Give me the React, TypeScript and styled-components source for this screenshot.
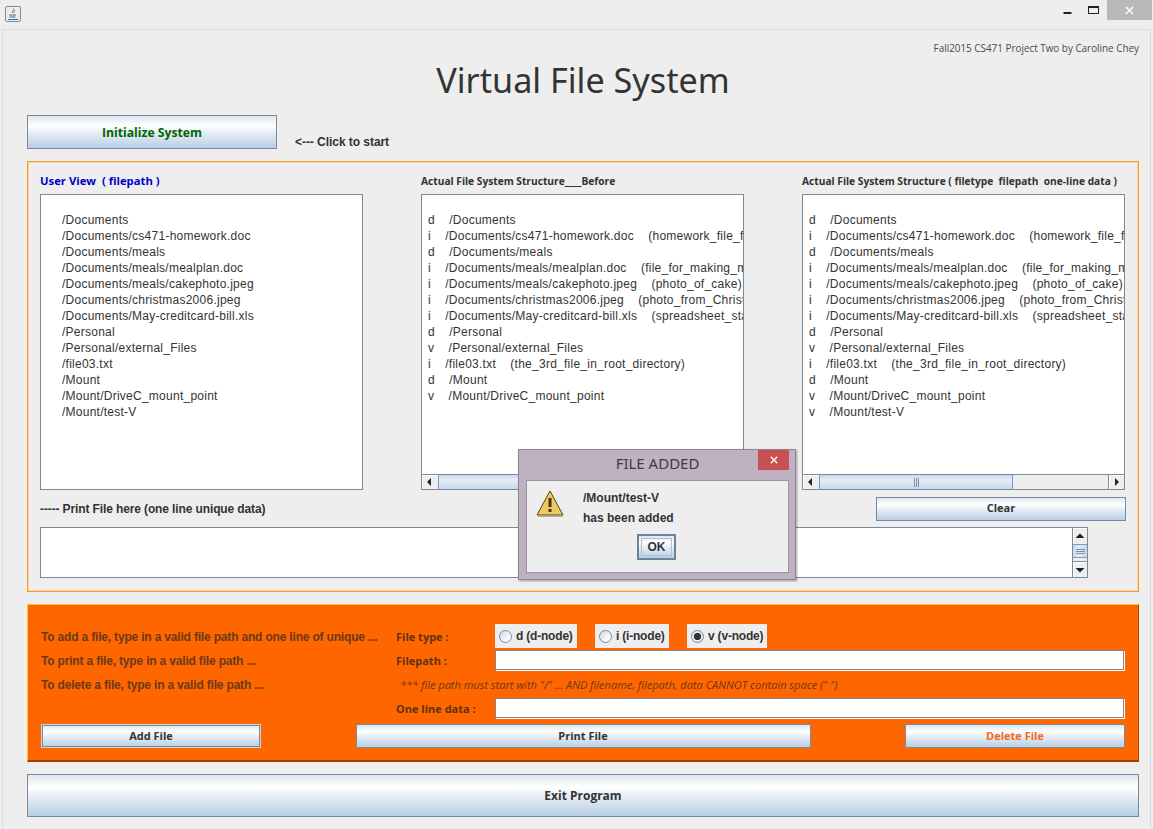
import * as React from "react";
import styled, { createGlobalStyle } from "styled-components";

const UI_FONT = `"Open Sans", "Noto Sans", sans-serif`;
const ARIAL = `"Liberation Sans", Arial, sans-serif`;
const EDGE = "#7a8a99";
const OCEAN = "linear-gradient(180deg, #dce6f0 0%, #ffffff 30%, #dfe8f2 60%, #b8cfe5 100%)";

const GlobalStyle = createGlobalStyle`
  html, body {
    margin: 0;
    padding: 0;
    background: #eeeeee;
  }
  * {
    box-sizing: border-box;
  }
`;

const Frame = styled.div`
  position: relative;
  width: 1153px;
  height: 829px;
  overflow: hidden;
  background: #eeeeee;
  color: #333333;
  font-family: ${ARIAL};
`;

const TitleBar = styled.div`
  display: flex;
  justify-content: space-between;
  height: 29px;
  padding: 0 1px 0 5px;
`;

const AppIcon = styled.div`
  width: 16px;
  height: 16px;
  margin-top: 6px;
  border: 1px solid #7f8b96;
  border-radius: 2px;
  background: #e8edf2;
  display: flex;
  align-items: center;
  justify-content: center;
`;

const WindowControls = styled.div`
  display: flex;
  height: 20px;
`;

const WindowControl = styled.div<{ $close?: boolean; $width: number }>`
  width: ${(p) => p.$width}px;
  display: flex;
  align-items: center;
  justify-content: center;
  background: ${(p) => (p.$close ? "#b9b9b9" : "transparent")};
`;

const Content = styled.div`
  margin: 0 2px;
  height: 800px;
  padding: 0 11px 0 24px;
  border: 1px solid #dcdcdc;
  border-bottom: none;
`;

const Header = styled.header`
  height: 85px;
  display: flex;
  flex-direction: column;
`;

const Credit = styled.div`
  align-self: flex-end;
  margin-top: 11px;
  font-family: ${UI_FONT};
  font-size: 9.9px;
  line-height: 15px;
  color: #4a4a4a;
`;

const Title = styled.h1`
  margin: 0;
  text-align: center;
  font-family: "Noto Sans", sans-serif;
  font-weight: 400;
  font-size: 34.2px;
  line-height: 48px;
  color: #333333;
`;

const StartRow = styled.div`
  display: flex;
  align-items: flex-end;
  gap: 18px;
  height: 34px;
  margin-bottom: 12px;
`;

const Hint = styled.span`
  margin-bottom: -1px;
  font-size: 12px;
  font-weight: 700;
  line-height: 16px;
  letter-spacing: -0.05px;
  color: #333333;
`;

const Button = styled.button<{ $w?: number; $h: number; $ink?: string; $size?: number; $halo?: boolean }>`
  display: block;
  flex: none;
  width: ${(p) => (p.$w ? `${p.$w}px` : "100%")};
  height: ${(p) => p.$h}px;
  padding: 0 0 ${(p) => (p.$h === 24 ? 2 : 0)}px;
  border: 1px solid ${(p) => (p.$halo ? "#c9d3de" : EDGE)};
  box-shadow: ${(p) => (p.$halo ? `inset 0 0 0 1px ${EDGE}` : "none")};
  background: ${OCEAN};
  color: ${(p) => p.$ink ?? "#333333"};
  font-family: ${UI_FONT};
  font-size: ${(p) => p.$size ?? 11}px;
  font-weight: 700;
`;

const ViewPanel = styled.section`
  height: 431px;
  padding: 0 12px;
  border: 1px solid #fb9a1e;
  box-shadow: inset 0 0 0 1px rgba(247, 170, 60, 0.35);
  margin-bottom: 12px;
`;

const Columns = styled.div`
  display: grid;
  grid-template-columns: repeat(3, 323px);
  column-gap: 58px;
`;

const ColumnLabel = styled.div<{ $blue?: boolean }>`
  height: 32px;
  padding-top: 12px;
  font-family: ${UI_FONT};
  font-size: ${(p) => (p.$blue ? 11.3 : 10.2)}px;
  font-weight: 700;
  line-height: 14px;
  white-space: pre;
  color: ${(p) => (p.$blue ? "#0000cc" : "#333333")};
`;

const LabelRule = styled.span`
  font-size: 13.6px;
  line-height: 0;
`;

const ListBox = styled.div`
  display: flex;
  flex-direction: column;
  height: 296px;
  border: 1px solid ${EDGE};
  background: #ffffff;
`;

const ListBody = styled.div<{ $inset: number }>`
  flex: 1;
  min-height: 0;
  overflow: hidden;
  padding: 17px 0 0 ${(p) => p.$inset}px;
`;

const ListRow = styled.div`
  height: 16px;
  font-size: 12px;
  line-height: 16px;
  letter-spacing: 0.25px;
  white-space: pre;
  color: #333333;
`;

const HScroll = styled.div`
  flex: none;
  display: flex;
  height: 15px;
  background: #eeeeee;
  border-top: 1px solid ${EDGE};
`;

const ScrollEnd = styled.div<{ $trail?: boolean }>`
  flex: none;
  width: 16px;
  display: flex;
  align-items: center;
  justify-content: center;
  background: #eeeeee;
  border-left: ${(p) => (p.$trail ? `1px solid ${EDGE}` : "none")};
  box-shadow: inset 1px 1px 0 #ffffff;
`;

const HThumb = styled.div`
  width: 194px;
  display: flex;
  align-items: center;
  justify-content: center;
  gap: 1px;
  background: linear-gradient(180deg, #c6d8ee 0%, #e6eef8 35%, #c6d8ee 100%);
  border-left: 1px solid #7b9ac0;
  border-right: 1px solid #7b9ac0;
`;

const HGrip = styled.i`
  width: 1px;
  height: 9px;
  background: #7f8fa3;
`;

const HTrack = styled.div`
  flex: 1;
`;

const PrintRow = styled.div`
  display: flex;
  align-items: center;
  justify-content: space-between;
  height: 37px;
`;

const PrintLabel = styled.span`
  font-size: 12px;
  font-weight: 700;
  line-height: 16px;
  letter-spacing: -0.12px;
`;

const PrintBox = styled.div`
  display: flex;
  justify-content: flex-end;
  width: 1048px;
  height: 51px;
  border: 1px solid ${EDGE};
  background: #ffffff;
`;

const VScroll = styled.div`
  flex: none;
  width: 15px;
  display: flex;
  flex-direction: column;
  background: #eeeeee;
  border-left: 1px solid ${EDGE};
`;

const VEnd = styled.div<{ $end?: boolean }>`
  flex: none;
  height: 16px;
  display: flex;
  align-items: center;
  justify-content: center;
  border-top: ${(p) => (p.$end ? `1px solid ${EDGE}` : "none")};
  box-shadow: inset 1px 1px 0 #ffffff;
`;

const VThumb = styled.div`
  flex: none;
  height: 14px;
  display: flex;
  flex-direction: column;
  align-items: center;
  justify-content: center;
  gap: 1px;
  background: linear-gradient(90deg, #c6d8ee 0%, #e6eef8 40%, #c6d8ee 100%);
  border-top: 1px solid #7b9ac0;
  border-bottom: 1px solid #7b9ac0;
`;

const VGrip = styled.i`
  width: 9px;
  height: 1px;
  background: #7f8fa3;
`;

const VTrack = styled.div`
  flex: 1;
`;

const ActionPanel = styled.section`
  height: 158px;
  padding: 19px 13px 0;
  margin-bottom: 12px;
  background: #ff6600;
  border: 1px solid #ffc233;
  border-right-color: #9c4200;
  border-bottom: 2px solid #9c4200;
`;

const FormGrid = styled.div`
  display: grid;
  grid-template-columns: 355px 99px 629px;
  grid-auto-rows: 24px;
  align-items: center;
  margin-bottom: 4px;
`;

const Instruction = styled.div`
  padding-top: 2px;
  font-size: 12px;
  font-weight: 700;
  line-height: 16px;
  letter-spacing: -0.18px;
  color: #6a3a18;
  white-space: nowrap;
`;

const FieldLabel = styled.div`
  font-family: ${UI_FONT};
  font-size: 11px;
  font-weight: 700;
  color: #5e3312;
`;

const RadioGroup = styled.div`
  display: flex;
  gap: 18px;
`;

const RadioOption = styled.label<{ $w: number }>`
  width: ${(p) => p.$w}px;
  height: 24px;
  display: flex;
  align-items: center;
  gap: 4px;
  padding-left: 4px;
  background: #eeeeee;
  font-size: 12px;
  font-weight: 700;
  letter-spacing: -0.2px;
  color: #333333;
`;

const RadioDot = styled.span<{ $on?: boolean }>`
  width: 13px;
  height: 13px;
  border-radius: 50%;
  border: 1px solid ${EDGE};
  background: ${(p) =>
    p.$on
      ? "radial-gradient(circle, #333333 0 3.4px, #e4ebf3 3.9px)"
      : "linear-gradient(135deg, #c9d8e8 0%, #ffffff 80%)"};
`;

const TextField = styled.div`
  height: 20px;
  background: #ffffff;
  border: 1px solid #80868c;
  box-shadow: 1px 1px 0 #ffffff;
`;

const Note = styled.div`
  grid-column: 2 / 4;
  padding-left: 4px;
  font-family: ${UI_FONT};
  font-size: 11px;
  font-style: italic;
  white-space: pre;
  color: #6a3a18;
`;

const ActionRow = styled.div`
  display: flex;
  justify-content: space-between;
`;

const Dialog = styled.div`
  position: absolute;
  left: 518px;
  top: 449px;
  width: 278px;
  height: 131px;
  padding: 0 6px 6px 7px;
  display: flex;
  flex-direction: column;
  background: #bfb0c2;
  border: 1px solid #8f8496;
  box-shadow: 1px 1px 2px rgba(0, 0, 0, 0.35);
`;

const DialogHead = styled.div`
  position: relative;
  flex: none;
  height: 30px;
  padding-bottom: 4px;
  display: flex;
  align-items: center;
  justify-content: center;
  font-family: "Noto Sans", sans-serif;
  font-size: 15px;
  color: #3c3c44;
`;

const DialogClose = styled.div`
  position: absolute;
  right: 0;
  top: 0;
  width: 31px;
  height: 20px;
  display: flex;
  align-items: center;
  justify-content: center;
  background: #c75050;
`;

const DialogBody = styled.div`
  flex: 1;
  display: flex;
  flex-direction: column;
  padding: 8px 0 0 9px;
  background: #eeeeee;
  border: 1px solid #9a93a3;
`;

const DialogMessage = styled.div`
  display: flex;
  gap: 19px;
  height: 45px;
`;

const DialogText = styled.div`
  margin-top: -1px;
  font-size: 12px;
  font-weight: 700;
  line-height: 20px;
`;

const OkButton = styled.button`
  align-self: flex-start;
  width: 39px;
  height: 26px;
  margin: 0 0 0 101px;
  padding: 0;
  border: 2px solid #6f8296;
  background: ${OCEAN};
  font-family: ${ARIAL};
  font-size: 12px;
  font-weight: 700;
  color: #333333;
  outline: 1px solid #a9c0d8;
  outline-offset: -5px;
`;

const Arrow: React.FC<{ dir: "left" | "right" | "up" | "down" }> = ({ dir }) => {
  const points = {
    left: "6,1 6,9 2,5",
    right: "3,1 3,9 7,5",
    up: "0.5,7 9.5,7 5,2.5",
    down: "0.5,3 9.5,3 5,7.5",
  }[dir];
  return (
    <svg width="10" height="10" viewBox="0 0 10 10">
      <polygon points={points} fill="#222222" />
    </svg>
  );
};

const Cross: React.FC<{ size: number; width: number }> = ({ size, width }) => (
  <svg width={size} height={size} viewBox="0 0 10 10">
    <path d="M1 1L9 9M9 1L1 9" stroke="#ffffff" strokeWidth={width} fill="none" />
  </svg>
);

const HorizontalBar = () => (
  <HScroll>
    <ScrollEnd>
      <Arrow dir="left" />
    </ScrollEnd>
    <HThumb>
      <HGrip />
      <HGrip />
      <HGrip />
    </HThumb>
    <HTrack />
    <ScrollEnd $trail>
      <Arrow dir="right" />
    </ScrollEnd>
  </HScroll>
);

const userPaths = [
  "/Documents",
  "/Documents/cs471-homework.doc",
  "/Documents/meals",
  "/Documents/meals/mealplan.doc",
  "/Documents/meals/cakephoto.jpeg",
  "/Documents/christmas2006.jpeg",
  "/Documents/May-creditcard-bill.xls",
  "/Personal",
  "/Personal/external_Files",
  "/file03.txt",
  "/Mount",
  "/Mount/DriveC_mount_point",
  "/Mount/test-V",
];

const structure = [
  "d    /Documents",
  "i    /Documents/cs471-homework.doc    (homework_file_for_cs471)",
  "d    /Documents/meals",
  "i    /Documents/meals/mealplan.doc    (file_for_making_meal_plan)",
  "i    /Documents/meals/cakephoto.jpeg    (photo_of_cake)",
  "i    /Documents/christmas2006.jpeg    (photo_from_Christmas_2006)",
  "i    /Documents/May-creditcard-bill.xls    (spreadsheet_statement_May)",
  "d    /Personal",
  "v    /Personal/external_Files",
  "i    /file03.txt    (the_3rd_file_in_root_directory)",
  "d    /Mount",
  "v    /Mount/DriveC_mount_point",
];

export default function App() {
  return (
    <Frame>
      <GlobalStyle />
      <TitleBar>
        <AppIcon>
          <svg width="12" height="13" viewBox="0 0 12 13">
            <path d="M6.5 0.5C7.5 2 4.5 3 5.5 5M8 2C7 3 6.5 4 7.5 5" stroke="#d9661f" strokeWidth="1" fill="none" />
            <path d="M2 7H9M2.5 9H8.5M1 11.5H11" stroke="#3f6f9f" strokeWidth="1" fill="none" />
          </svg>
        </AppIcon>
        <WindowControls>
          <WindowControl $width={24}>
            <svg width="9" height="9" viewBox="0 0 9 9">
              <rect x="0.5" y="6" width="8" height="2" fill="#222222" />
            </svg>
          </WindowControl>
          <WindowControl $width={28}>
            <svg width="11" height="9" viewBox="0 0 11 9">
              <rect x="0.5" y="0.5" width="10" height="7" fill="none" stroke="#222222" />
              <rect x="0" y="0" width="11" height="2" fill="#222222" />
            </svg>
          </WindowControl>
          <WindowControl $close $width={45}>
            <Cross size={9} width={1.6} />
          </WindowControl>
        </WindowControls>
      </TitleBar>
      <Content>
        <Header>
          <Credit>Fall2015 CS471 Project Two by Caroline Chey</Credit>
          <Title>Virtual File System</Title>
        </Header>
        <StartRow>
          <Button $w={250} $h={34} $ink="#006400" $size={12.2}>
            Initialize System
          </Button>
          <Hint>&lt;--- Click to start</Hint>
        </StartRow>
        <ViewPanel>
          <Columns>
            <div>
              <ColumnLabel $blue>{"User View  ( filepath )"}</ColumnLabel>
              <ListBox>
                <ListBody $inset={21}>
                  {userPaths.map((path) => (
                    <ListRow key={path}>{path}</ListRow>
                  ))}
                </ListBody>
              </ListBox>
            </div>
            <div>
              <ColumnLabel>
                Actual File System Structure<LabelRule>___</LabelRule>Before
              </ColumnLabel>
              <ListBox>
                <ListBody $inset={6}>
                  {structure.map((row) => (
                    <ListRow key={row}>{row}</ListRow>
                  ))}
                </ListBody>
                <HorizontalBar />
              </ListBox>
            </div>
            <div>
              <ColumnLabel>{"Actual File System Structure ( filetype  filepath  one-line data )"}</ColumnLabel>
              <ListBox>
                <ListBody $inset={6}>
                  {[...structure, "v    /Mount/test-V"].map((row) => (
                    <ListRow key={row}>{row}</ListRow>
                  ))}
                </ListBody>
                <HorizontalBar />
              </ListBox>
            </div>
          </Columns>
          <PrintRow>
            <PrintLabel>----- Print File here (one line unique data)</PrintLabel>
            <Button $w={250} $h={24}>
              Clear
            </Button>
          </PrintRow>
          <PrintBox>
            <VScroll>
              <VEnd>
                <Arrow dir="up" />
              </VEnd>
              <VThumb>
                <VGrip />
                <VGrip />
                <VGrip />
              </VThumb>
              <VTrack />
              <VEnd $end>
                <Arrow dir="down" />
              </VEnd>
            </VScroll>
          </PrintBox>
        </ViewPanel>
        <ActionPanel>
          <FormGrid>
            <Instruction>To add a file, type in a valid file path and one line of unique ...</Instruction>
            <FieldLabel>File type :</FieldLabel>
            <RadioGroup>
              <RadioOption $w={82}>
                <RadioDot />d (d-node)
              </RadioOption>
              <RadioOption $w={74}>
                <RadioDot />i (i-node)
              </RadioOption>
              <RadioOption $w={80}>
                <RadioDot $on />v (v-node)
              </RadioOption>
            </RadioGroup>
            <Instruction>To print a file, type in a valid file path ...</Instruction>
            <FieldLabel>Filepath :</FieldLabel>
            <TextField />
            <Instruction>To delete a file, type in a valid file path ...</Instruction>
            <Note>{'*** file path must start with "/" ... AND filename, filepath, data CANNOT contain space (" ")'}</Note>
            <span />
            <FieldLabel>One line data :</FieldLabel>
            <TextField />
          </FormGrid>
          <ActionRow>
            <Button $w={220} $h={24} $halo>
              Add File
            </Button>
            <Button $w={455} $h={24}>
              Print File
            </Button>
            <Button $w={220} $h={24} $ink="#f26a21">
              Delete File
            </Button>
          </ActionRow>
        </ActionPanel>
        <Button $h={43} $size={12}>
          Exit Program
        </Button>
      </Content>
      <Dialog>
        <DialogHead>
          FILE ADDED
          <DialogClose>
            <Cross size={8} width={1.6} />
          </DialogClose>
        </DialogHead>
        <DialogBody>
          <DialogMessage>
            <svg width="28" height="28" viewBox="0 0 28 28">
              <path d="M14 2L27 26H1Z" fill="#e9cb62" stroke="#5b3d12" strokeWidth="1" strokeLinejoin="round" />
              <path d="M2 27.5H27" stroke="#b8b0a4" strokeWidth="1" />
              <rect x="12.5" y="9" width="3" height="9" fill="#5b2a10" />
              <rect x="12.5" y="20" width="3" height="3" fill="#5b2a10" />
            </svg>
            <DialogText>
              /Mount/test-V
              <br />
              has been added
            </DialogText>
          </DialogMessage>
          <OkButton>OK</OkButton>
        </DialogBody>
      </Dialog>
    </Frame>
  );
}
